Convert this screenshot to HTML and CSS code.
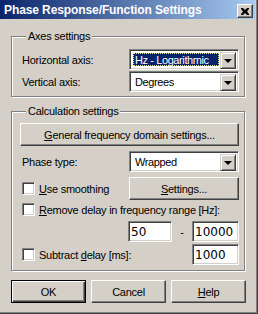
FILE: index.html
```html
<!DOCTYPE html>
<html lang="en">
<head>
  <meta charset="UTF-8" />
  <title>Phase Response/Function Settings</title>
  <link rel="stylesheet" href="styles.css">
</head>
<body>
  <div class="window">
    <!-- Title bar -->
    <div class="titlebar">
      <span class="title">Phase Response/Function Settings</span>
      <button class="close">
        <svg width="8" height="7" viewBox="0 0 8 7"><path d="M0 0h2l2 2 2-2h2v1L6 3.5 8 6v1H6L4 5 2 7H0V6l2-2.5L0 1z" fill="#000"/></svg>
      </button>
    </div>

    <div class="content">
      <!-- Axes -->
      <fieldset class="group axes">
        <legend>Axes settings</legend>
        <div class="row">
          <span class="label">Horizontal axis:</span>
          <div class="combo">
            <span class="value selected">Hz - Logarithmic</span>
            <span class="drop"></span>
          </div>
        </div>
        <div class="row gap1">
          <span class="label">Vertical axis:</span>
          <div class="combo">
            <span class="value">Degrees</span>
            <span class="drop"></span>
          </div>
        </div>
      </fieldset>

      <!-- Calculation -->
      <fieldset class="group calc">
        <legend>Calculation settings</legend>
        <button class="btn wide"><u>G</u>eneral frequency domain settings...</button>
        <div class="row gap5">
          <span class="label">Phase type:</span>
          <div class="combo">
            <span class="value">Wrapped</span>
            <span class="drop"></span>
          </div>
        </div>
        <div class="row gap5 tall">
          <label class="check"><span class="box"></span><span><u>U</u>se smoothing</span></label>
          <button class="btn side"><u>S</u>ettings...</button>
        </div>
        <div class="row gap3 short">
          <label class="check"><span class="box"></span><span><u>R</u>emove delay in frequency range [Hz]:</span></label>
        </div>
        <div class="row gap5 range">
          <input class="field small" type="text" value="50">
          <span class="dash">-</span>
          <input class="field" type="text" value="10000">
        </div>
        <div class="row gap2">
          <label class="check"><span class="box"></span><span>Subtract <u>d</u>elay [ms]:</span></label>
          <input class="field" type="text" value="1000">
        </div>
      </fieldset>

      <!-- Dialog buttons -->
      <div class="actions">
        <button class="btn default">OK</button>
        <button class="btn">Cancel</button>
        <button class="btn"><u>H</u>elp</button>
      </div>
    </div>
  </div>
</body>
</html>
```

FILE: styles.css
```css
:root {
  --face: #d4d0c8;
  --shadow: #808080;
  --dark: #404040;
  --light: #fff;
  --navy: #0a246a;
  --sky: #a6caf0;
}

* {
  box-sizing: border-box;
}

body {
  margin: 0;
  font-family: 'Liberation Sans', Arial, sans-serif;
  font-size: 11px;
  letter-spacing: -0.25px;
  color: #000;
  background: var(--face);
}

.window {
  width: 258px;
  height: 314px;
  background: var(--face);
  border-right: 1px solid var(--dark);
  border-bottom: 1px solid var(--dark);
  box-shadow: inset -1px -1px 0 var(--shadow);
  padding: 0 2px 2px 0;
}

.titlebar {
  height: 19px;
  display: flex;
  align-items: center;
  justify-content: space-between;
  padding: 0 2px 0 4px;
  background: linear-gradient(to right, var(--navy), var(--sky));
}

.title {
  color: #fff;
  font-weight: bold;
  font-size: 12px;
  letter-spacing: -0.1px;
}

.close {
  width: 16px;
  height: 14px;
  margin-top: 3px;
  padding: 0;
  display: flex;
  align-items: center;
  justify-content: center;
  background: var(--face);
  border: 1px solid;
  border-color: var(--light) var(--dark) var(--dark) var(--light);
  box-shadow: inset -1px -1px 0 var(--shadow);
}

.content {
  padding: 11px 0 0 11px;
}

.group {
  margin: 0;
  width: 234px;
  border: 1px solid var(--shadow);
  box-shadow: inset 1px 1px 0 var(--light), 1px 1px 0 var(--light);
  padding: 0 5px 0 9px;
}

.group legend {
  padding: 0 2px;
  margin-left: 5px;
  line-height: 13px;
  background: var(--face);
}

.axes {
  padding-top: 6px;
  padding-bottom: 4px;
}

.calc {
  margin-top: 8px;
  padding-top: 5px;
  padding-bottom: 5px;
}

.row {
  display: flex;
  align-items: center;
  justify-content: space-between;
  height: 21px;
}

.row.tall {
  height: 23px;
}

.row.short {
  height: 13px;
}

.gap1 { margin-top: 1px; }
.gap2 { margin-top: 2px; }
.gap3 { margin-top: 3px; }
.gap5 { margin-top: 5px; }

.label {
  padding-left: 1px;
}

/* Sunken controls */
.combo,
.field {
  width: 110px;
  height: 21px;
  background: #fff;
  border: 1px solid;
  border-color: var(--shadow) var(--light) var(--light) var(--shadow);
  box-shadow: inset 1px 1px 0 var(--dark), inset -1px -1px 0 var(--face);
}

.combo {
  display: flex;
  padding: 2px;
}

.combo .value {
  flex: 1;
  margin: 1px;
  padding-left: 2px;
  line-height: 15px;
  letter-spacing: -0.4px;
  white-space: nowrap;
  overflow: hidden;
}

.combo .value.selected {
  background: var(--navy);
  color: #fff;
  outline: 1px dotted #e8e0a0;
  outline-offset: -1px;
}

.combo .drop {
  width: 16px;
  height: 17px;
  position: relative;
  background: var(--face);
  border: 1px solid;
  border-color: var(--face) var(--dark) var(--dark) var(--face);
  box-shadow: inset 1px 1px 0 var(--light), inset -1px -1px 0 var(--shadow);
}

.combo .drop::after {
  content: '';
  position: absolute;
  left: 3px;
  top: 6px;
  border-left: 4px solid transparent;
  border-right: 4px solid transparent;
  border-top: 4px solid #000;
  width: 0;
  height: 0;
}

.field {
  width: 47px;
  padding: 0 0 0 2px;
  font-family: 'DejaVu Sans', sans-serif;
  font-size: 12px;
  letter-spacing: 0;
  color: #000;
  outline: none;
}

.field.small {
  width: 44px;
}

.range {
  justify-content: flex-end;
}

.range .dash {
  width: 20px;
  text-align: center;
}

/* Checkboxes */
.check {
  display: flex;
  align-items: center;
  gap: 4px;
  padding-left: 1px;
}

.check .box {
  width: 13px;
  height: 13px;
  background: #fff;
  border: 1px solid;
  border-color: var(--shadow) var(--light) var(--light) var(--shadow);
  box-shadow: inset 1px 1px 0 var(--dark), inset -1px -1px 0 var(--face);
}

/* Raised buttons */
.btn {
  height: 23px;
  width: 75px;
  padding: 0;
  font-family: inherit;
  font-size: 11px;
  letter-spacing: -0.25px;
  color: #000;
  background: var(--face);
  border: 1px solid;
  border-color: var(--light) var(--dark) var(--dark) var(--light);
  box-shadow: inset -1px -1px 0 var(--shadow);
}

.btn.wide {
  display: block;
  width: 219px;
  margin-left: -1px;
}

.btn.side {
  width: 110px;
}

.btn.default {
  border-color: #000;
  box-shadow: inset 1px 1px 0 var(--light), inset -1px -1px 0 var(--dark), inset -2px -2px 0 var(--shadow);
}

.actions {
  width: 235px;
  margin-top: 9px;
  display: flex;
  justify-content: space-between;
}
```
